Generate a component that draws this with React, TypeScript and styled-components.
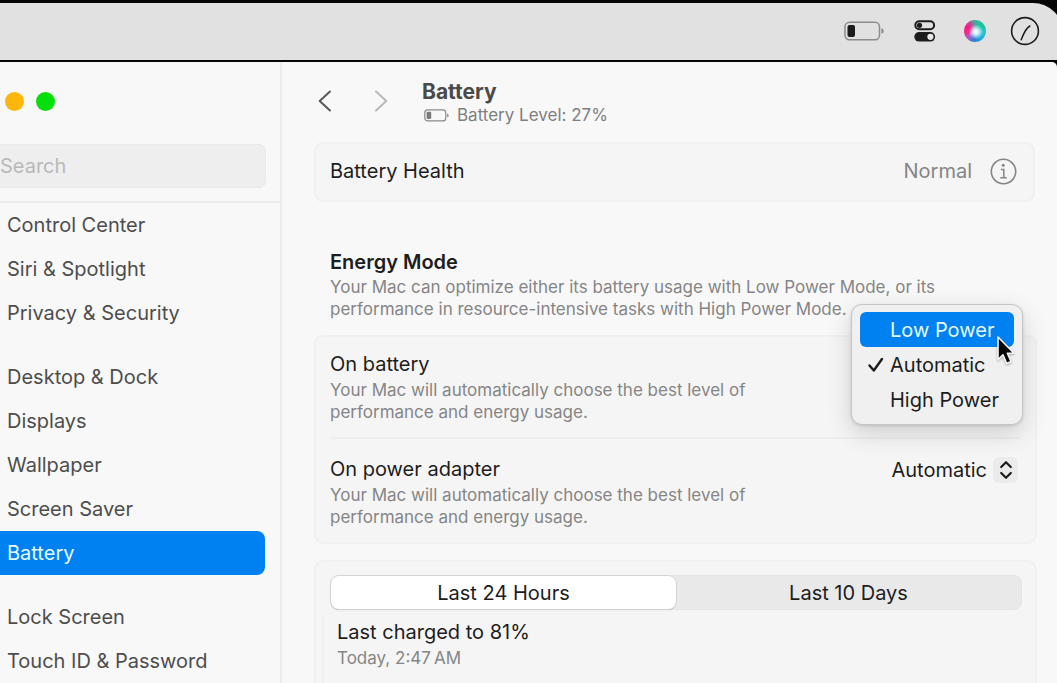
import React, { useState } from "react";
import styled, { createGlobalStyle } from "styled-components";

const GlobalStyle = createGlobalStyle`
  *, *::before, *::after { box-sizing: border-box; }
  body {
    margin: 0;
    background: #060506;
    font-family: Inter, "Liberation Sans", sans-serif;
    font-size: 20px;
    line-height: 24px;
    color: #1d1d1d;
  }
  button, input, select { font: inherit; color: inherit; }
  h1, h2, h3, p, ul { margin: 0; padding: 0; }
`;

const Screen = styled.div`
  display: flex;
  flex-direction: column;
  gap: 2px;
  height: 100vh;
  padding-top: 3px;
  overflow: hidden;
`;

const MenuBar = styled.header`
  display: flex;
  flex: none;
  align-items: center;
  justify-content: flex-end;
  height: 57px;
  margin-right: -6px;
  padding: 0 23px 2px 0;
  background: #e1e1e1;
  border-top-right-radius: 30px;
`;

const StatusButton = styled.button<{ $gap?: number }>`
  display: flex;
  padding: 0;
  border: 0;
  background: none;
  margin-left: ${(p) => p.$gap ?? 0}px;
`;

const SiriOrb = styled.span`
  width: 22px;
  height: 22px;
  border-radius: 50%;
  background:
    radial-gradient(circle at 54% 54%, #ffffff 0%, rgba(214, 246, 255, 0.9) 17%, rgba(120, 220, 245, 0) 44%),
    conic-gradient(from 0deg at 50% 50%, #35b59a 0deg, #19c4a4 60deg, #2cc3cf 100deg, #1ba6d8 150deg, #3577cf 190deg, #b05cc8 225deg, #f8288e 260deg, #f81c86 305deg, #8f6f96 340deg, #35b59a 360deg);
`;

const Window = styled.div`
  display: flex;
  flex: 1;
  min-height: 0;
  background: #f8f8f8;
  border-top-right-radius: 5px;
  overflow: hidden;
`;

const Sidebar = styled.nav`
  display: flex;
  flex: none;
  flex-direction: column;
  width: 282px;
  border-right: 2px solid #ececec;
  color: #4d4d4d;
`;

const TrafficLights = styled.div`
  display: flex;
  gap: 12px;
  padding: 30px 0 33px 5px;
`;

const Light = styled.button<{ $color: string }>`
  width: 19px;
  height: 19px;
  padding: 0;
  border: 0;
  border-radius: 50%;
  background: ${(p) => p.$color};
`;

const SearchArea = styled.div`
  display: flex;
  padding: 0 14px 13px 0;
  border-bottom: 2px solid #ececec;
`;

const SearchInput = styled.input`
  width: 100%;
  height: 44px;
  padding: 0;
  border: 1px solid #eaeaea;
  border-left: 0;
  border-radius: 0 7px 7px 0;
  background: #eeeeee;
  outline: none;
  &::placeholder { color: #b9b9b9; opacity: 1; }
`;

const NavGroup = styled.ul`
  list-style: none;
  padding-right: 15px;
  & + & { margin-top: 20px; }
`;

const NavLink = styled.a<{ $active: boolean }>`
  display: flex;
  align-items: center;
  height: 44px;
  padding-left: 7px;
  border-radius: 0 8px 8px 0;
  text-decoration: none;
  color: ${(p) => (p.$active ? "#e4fbff" : "inherit")};
  background: ${(p) => (p.$active ? "#0081f2" : "none")};
`;

const Content = styled.main`
  flex: 1;
  min-width: 0;
  padding: 0 20px 0 32px;
`;

const Toolbar = styled.div`
  display: flex;
  align-items: center;
  gap: 34px;
  height: 80px;
  padding-left: 4px;
`;

const History = styled.div`
  display: flex;
  gap: 42px;
  padding-bottom: 2px;
`;

const NavButton = styled.button`
  display: flex;
  padding: 0;
  border: 0;
  background: none;
`;

const TitleBlock = styled.div`
  padding-top: 2px;
`;

const Title = styled.h1`
  font-size: 21px;
  line-height: 24px;
  font-weight: 700;
  color: #4a4a4a;
`;

const Subtitle = styled.p`
  display: flex;
  align-items: center;
  gap: 8px;
  padding-left: 2px;
  font-size: 17px;
  line-height: 22px;
  color: #7f7f7f;
`;

const Card = styled.section`
  border: 2px solid #f0f0f0;
  border-radius: 9px;
  background: #f5f5f5;
`;

const HealthCard = styled(Card)`
  display: flex;
  align-items: center;
  height: 60px;
  margin-right: 2px;
  padding: 0 16px 2px 14px;
`;

const RowTitle = styled.h3`
  font-size: 20px;
  line-height: 24px;
  font-weight: 400;
`;

const Value = styled.span`
  margin-left: auto;
  color: #858585;
`;

const IconButton = styled.button`
  display: flex;
  margin-left: 18px;
  padding: 0;
  border: 0;
  background: none;
`;

const SectionHead = styled.div`
  padding: 46px 16px 15px;
`;

const SectionTitle = styled.h2`
  font-size: 20px;
  line-height: 28px;
  font-weight: 600;
`;

const Description = styled.p`
  max-width: 640px;
  font-size: 17px;
  line-height: 22px;
  color: #858585;
`;

const Setting = styled.div`
  display: flex;
  align-items: flex-start;
  justify-content: space-between;
  margin: 0 14px;
  padding: 15px 0 14px;
  & + & { border-top: 2px solid #eeeeee; padding-top: 18px; }
`;

const SettingText = styled.div`
  display: flex;
  flex-direction: column;
  gap: 3px;
`;

const SettingDescription = styled(Description)`
  max-width: 440px;
`;

const SelectWrap = styled.span`
  position: relative;
  display: flex;
  margin-right: 3px;
`;

const ModeSelect = styled.select`
  appearance: none;
  field-sizing: content;
  height: 26px;
  padding: 0 31px 0 0;
  border: 0;
  background: none;
`;

const Stepper = styled.span`
  position: absolute;
  right: 0;
  top: 0;
  display: flex;
  align-items: center;
  justify-content: center;
  width: 25px;
  height: 26px;
  border-radius: 6px;
  background: #ebebeb;
  pointer-events: none;
`;

const MenuAnchor = styled.div`
  position: relative;
`;

const Menu = styled.div`
  position: absolute;
  z-index: 1;
  top: -48px;
  right: -2px;
  width: 172px;
  padding: 7px 8px;
  border: 1px solid #c6c6c6;
  border-radius: 11px;
  background: #f0f0f0;
  box-shadow: 0 8px 24px rgba(0, 0, 0, 0.16), 0 1px 3px rgba(0, 0, 0, 0.12);
`;

const MenuItem = styled.button<{ $active?: boolean }>`
  display: flex;
  align-items: center;
  width: 100%;
  height: 35px;
  padding: 0 0 0 7px;
  border: 0;
  border-radius: 6px;
  white-space: nowrap;
  color: ${(p) => (p.$active ? "#e4fbff" : "#1d1d1d")};
  background: ${(p) => (p.$active ? "#0081f2" : "none")};
`;

const CheckSlot = styled.span`
  display: flex;
  width: 23px;
  flex: none;
`;

const Pointer = styled.svg`
  position: absolute;
  left: 144px;
  top: 30px;
  filter: drop-shadow(0 1px 1px rgba(0, 0, 0, 0.3));
`;

const UsageCard = styled(Card)`
  margin-top: 16px;
  padding: 13px 13px 0 14px;
  height: 400px;
`;

const Segmented = styled.div`
  display: flex;
  height: 35px;
  border-radius: 8px;
  border: 1px solid #e5e5e5;
  background: #e9e9e9;
`;

const Segment = styled.button<{ $active: boolean }>`
  flex: 1;
  padding: 0;
  border: 0;
  border-radius: 8px;
  background: ${(p) => (p.$active ? "#ffffff" : "none")};
  box-shadow: ${(p) => (p.$active ? "0 0 0 1px #d4d4d4, 0 1px 1px rgba(0, 0, 0, 0.3)" : "none")};
`;

const ChargeInfo = styled.div`
  margin: 6px -6px 0 -8px;
  padding: 4px 0 0 13px;
  height: 300px;
  border-left: 2px solid #f0f0f0;
`;

const ChargeTime = styled(Description)`
  line-height: 28px;
`;

const groups = [
  ["Control Center", "Siri & Spotlight", "Privacy & Security"],
  ["Desktop & Dock", "Displays", "Wallpaper", "Screen Saver", "Battery"],
  ["Lock Screen", "Touch ID & Password"],
];

const modes = ["Low Power", "Automatic", "High Power"];
const ranges = ["Last 24 Hours", "Last 10 Days"];
const modeText =
  "Your Mac will automatically choose the best level of performance and energy usage.";

const BatteryIcon = () => (
  <svg width="40" height="20" viewBox="0 0 40 20" fill="none">
    <rect x="1" y="1.2" width="34.5" height="17.6" rx="4.5" stroke="#8c8c8c" strokeWidth="1.5" />
    <rect x="3.5" y="4" width="7.5" height="12" rx="2" fill="#1b1b1b" />
    <path d="M37.4 7.2c1.6.5 2.3 1.5 2.3 2.8s-.7 2.3-2.3 2.8z" fill="#8c8c8c" />
  </svg>
);

const SmallBatteryIcon = () => (
  <svg width="25" height="13" viewBox="0 0 25 13" fill="none">
    <rect x=".8" y=".9" width="21" height="11" rx="3" stroke="#8a8a8a" strokeWidth="1.2" />
    <rect x="2.6" y="2.8" width="4.6" height="7.2" rx="1" fill="#7b7b7b" />
    <path d="M23.2 4.6c1 .3 1.4 1 1.4 1.9s-.4 1.6-1.4 1.9z" fill="#8a8a8a" />
  </svg>
);

const ControlCenterIcon = () => (
  <svg width="22" height="22" viewBox="0 0 22 22" fill="none">
    <rect x="1.3" y="1.3" width="18.8" height="8" rx="4" stroke="#1c1c1c" strokeWidth="2" />
    <circle cx="5.5" cy="5.3" r="2.6" fill="#1c1c1c" />
    <rect x=".3" y="12" width="20.8" height="9.6" rx="4.8" fill="#1c1c1c" />
    <circle cx="16.4" cy="16.8" r="3.1" fill="#e8e8e8" />
  </svg>
);

const GaugeIcon = () => (
  <svg width="30" height="30" viewBox="0 0 30 30" fill="none" stroke="#1c1c1c">
    <circle cx="15" cy="15" r="13.4" strokeWidth="1.6" />
    <path d="M19.8 10C15.500 12.500 13.500 17.500 11.200 23.800" strokeWidth="1.500" strokeLinecap="round" />
  </svg>
);

const Chevron = ({ flip, color }: { flip?: boolean; color: string }) => (
  <svg width="14" height="24" viewBox="0 0 14 24" fill="none">
    <path
      d={flip ? "M2 2.500 12.300 12 2 21.500" : "M12 2.500 1.700 12 12 21.500"}
      stroke={color}
      strokeWidth="2"
      strokeLinecap="round"
      strokeLinejoin="round"
    />
  </svg>
);

const InfoIcon = () => (
  <svg width="27" height="27" viewBox="0 0 27 27" fill="none" stroke="#858585">
    <circle cx="13.500" cy="13.500" r="12.200" strokeWidth="1.600" />
    <circle cx="13.200" cy="7.300" r="1.500" fill="#858585" stroke="none" />
    <path d="M10.800 11.500h3v8M10.300 19.700h6.500" strokeWidth="1.500" />
  </svg>
);

const CheckIcon = () => (
  <svg width="18" height="16" viewBox="0 0 18 16" fill="none">
    <path d="M2.500 8.500 6.800 13.500 15 2" stroke="#1c1c1c" strokeWidth="2.400" strokeLinecap="round" strokeLinejoin="round" />
  </svg>
);

export default function App() {
  const [adapter, setAdapter] = useState("Automatic");
  const [battery, setBattery] = useState("Automatic");
  const [range, setRange] = useState(ranges[0]);

  return (
    <>
      <GlobalStyle />
      <Screen>
        <MenuBar>
          <StatusButton aria-label="Battery status"><BatteryIcon /></StatusButton>
          <StatusButton $gap={30} aria-label="Control Center"><ControlCenterIcon /></StatusButton>
          <StatusButton $gap={28} aria-label="Siri"><SiriOrb /></StatusButton>
          <StatusButton $gap={24} aria-label="Gauge"><GaugeIcon /></StatusButton>
        </MenuBar>
        <Window>
          <Sidebar>
            <TrafficLights>
              <Light $color="#fdb70c" aria-label="Minimize" />
              <Light $color="#05e00d" aria-label="Zoom" />
            </TrafficLights>
            <SearchArea>
              <SearchInput type="search" placeholder="Search" aria-label="Search" />
            </SearchArea>
            {groups.map((group) => (
              <NavGroup key={group[0]}>
                {group.map((name) => (
                  <li key={name}>
                    <NavLink href="#" $active={name === "Battery"}>{name}</NavLink>
                  </li>
                ))}
              </NavGroup>
            ))}
          </Sidebar>
          <Content>
            <Toolbar>
              <History>
                <NavButton aria-label="Back"><Chevron color="#585858" /></NavButton>
                <NavButton aria-label="Forward"><Chevron flip color="#b9b9b9" /></NavButton>
              </History>
              <TitleBlock>
                <Title>Battery</Title>
                <Subtitle><SmallBatteryIcon />Battery Level: 27%</Subtitle>
              </TitleBlock>
            </Toolbar>
            <HealthCard>
              <RowTitle>Battery Health</RowTitle>
              <Value>Normal</Value>
              <IconButton aria-label="Battery health details"><InfoIcon /></IconButton>
            </HealthCard>
            <SectionHead>
              <SectionTitle>Energy Mode</SectionTitle>
              <Description>
                Your Mac can optimize either its battery usage with Low Power Mode, or its
                performance in resource-intensive tasks with High Power Mode.
              </Description>
            </SectionHead>
            <Card>
              <Setting>
                <SettingText>
                  <RowTitle>On battery</RowTitle>
                  <SettingDescription>{modeText}</SettingDescription>
                </SettingText>
                <MenuAnchor>
                  <Menu role="menu" aria-label="On battery">
                    {modes.map((mode) => (
                      <MenuItem
                        key={mode}
                        role="menuitemradio"
                        aria-checked={mode === battery}
                        $active={mode === "Low Power"}
                        onClick={() => setBattery(mode)}
                      >
                        <CheckSlot>{mode === battery && <CheckIcon />}</CheckSlot>
                        {mode}
                      </MenuItem>
                    ))}
                    <Pointer width="20" height="31" viewBox="0 0 20 31">
                      <path
                        d="M2 2v22.500l5-4.700 3.600 8.600 4.400-1.900-3.600-8.300h6.600z"
                        fill="#050505"
                        stroke="#f5f5f5"
                        strokeWidth="1.600"
                        strokeLinejoin="round"
                      />
                    </Pointer>
                  </Menu>
                </MenuAnchor>
              </Setting>
              <Setting>
                <SettingText>
                  <RowTitle as="label" htmlFor="adapter-mode">On power adapter</RowTitle>
                  <SettingDescription>{modeText}</SettingDescription>
                </SettingText>
                <SelectWrap>
                  <ModeSelect id="adapter-mode" value={adapter} onChange={(e) => setAdapter(e.target.value)}>
                    {modes.map((mode) => <option key={mode}>{mode}</option>)}
                  </ModeSelect>
                  <Stepper>
                    <svg width="14" height="20" viewBox="0 0 14 20" fill="none" stroke="#1c1c1c" strokeWidth="2.200" strokeLinecap="round" strokeLinejoin="round">
                      <path d="M2.200 7 7 2.200 11.800 7M2.200 13 7 17.800 11.800 13" />
                    </svg>
                  </Stepper>
                </SelectWrap>
              </Setting>
            </Card>
            <UsageCard>
              <Segmented>
                {ranges.map((name) => (
                  <Segment key={name} $active={name === range} aria-pressed={name === range} onClick={() => setRange(name)}>
                    {name}
                  </Segment>
                ))}
              </Segmented>
              <ChargeInfo>
                <RowTitle>Last charged to 81%</RowTitle>
                <ChargeTime>Today, 2:47{"\u202f"}AM</ChargeTime>
              </ChargeInfo>
            </UsageCard>
          </Content>
        </Window>
      </Screen>
    </>
  );
}
